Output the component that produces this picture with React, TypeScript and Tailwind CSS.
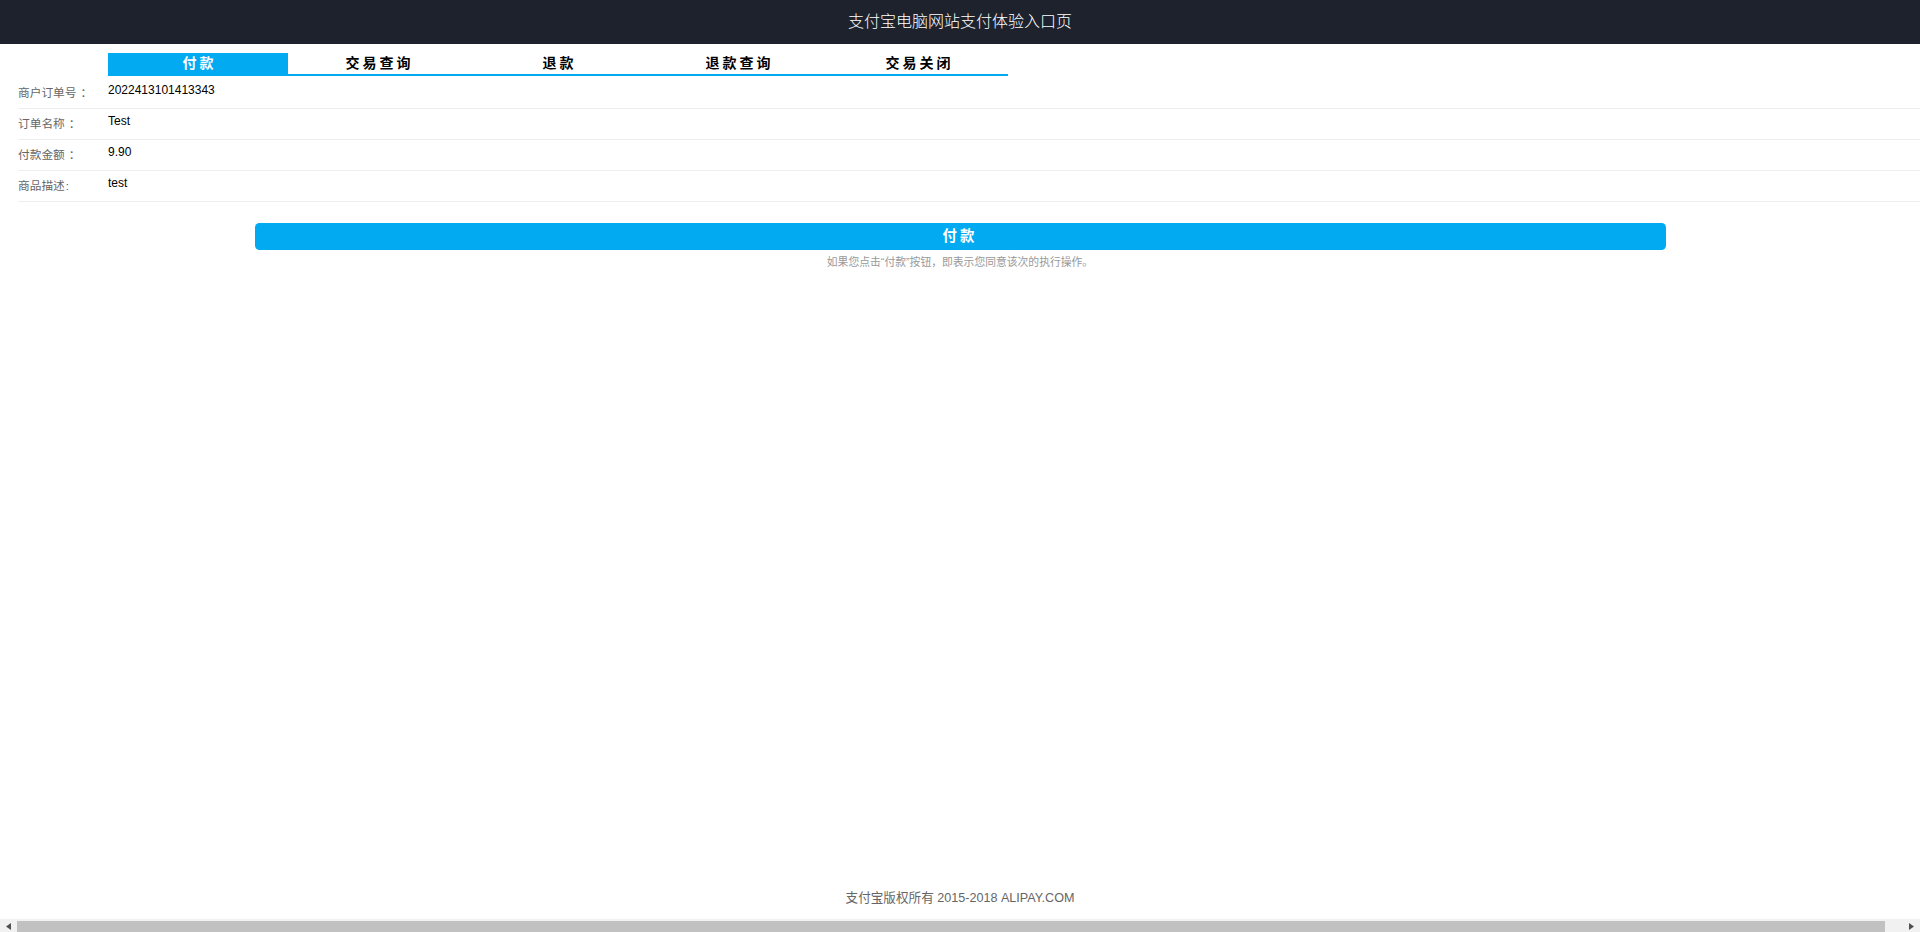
import React from "react";

const FONT = "font-['Liberation_Sans','Noto_Sans_CJK_SC',sans-serif]";

const tabs = ["付款", "交易查询", "退款", "退款查询", "交易关闭"];

const rows: [string, string, boolean][] = [
  ["商户订单号", "2022413101413343", true],
  ["订单名称", "Test", true],
  ["付款金额", "9.90", true],
  ["商品描述", "test", false],
];

export default function App() {
  return (
    <div className={`${FONT} h-[932px] w-full flex flex-col bg-white overflow-hidden`}>
      <header className="h-[44px] bg-[#1D222D] flex items-center justify-center shrink-0">
        <h1 className="text-[16px] font-light text-white leading-[18px]">支付宝电脑网站支付体验入口页</h1>
      </header>

      <div className="flex ml-[108px] mt-[9px]">
        {tabs.map((t, i) => (
          <div
            key={t}
            className={`w-[180px] h-[23px] border-b-2 border-[#02aaf1] flex items-center justify-center text-[14px] font-bold tracking-[3px] ${
              i === 0 ? "bg-[#02aaf1] text-white" : "text-black"
            }`}
          >
            <span className="pl-[3px]">{t}</span>
          </div>
        ))}
      </div>

      <div className="mt-[2px]">
        {rows.map(([label, value, wide]) => (
          <div key={label} className="ml-[18px] h-[31px] border-b border-[#eeeeee] flex items-start">
            <div className="w-[90px] mt-[8px] text-[11.7px] leading-[14px] text-[#666666]">
              {label}
              <span className={wide ? "ml-[4px]" : "ml-[1px]"}>{wide ? "：" : ":"}</span>
            </div>
            <div className="h-[25px] leading-[25px] text-[12px] text-black">{value}</div>
          </div>
        ))}
      </div>

      <div className="m-[18px] mt-[20px] flex flex-col items-center">
        <div className="w-[75%] p-[1px]">
          <button className="w-full h-[27px] bg-[#02aaf1] rounded-[4.5px] text-white font-bold text-[14.4px] tracking-[3px]">
            付款
          </button>
        </div>
        <span className="mt-[4px] w-full text-center text-[10.8px] leading-[14px] text-[#999999]">
          如果您点击“付款”按钮，即表示您同意该次的执行操作。
        </span>
      </div>

      <div className="flex-1" />

      <footer className="text-center text-[12.6px] leading-[18px] text-[#666666] mb-[12px]">
        支付宝版权所有 2015-2018 ALIPAY.COM
      </footer>

      <div className="h-[13px] bg-[#f1f1f1] flex shrink-0">
        <div className="w-[17px] flex items-center justify-center pt-[2px]">
          <svg width="5" height="7" viewBox="0 0 5 7">
            <path d="M5 0 L0 3.5 L5 7 Z" fill="#505050" />
          </svg>
        </div>
        <div className="flex-1 mt-[2px] bg-[#c1c1c1]" />
        <div className="w-[35px] flex items-center justify-end pr-[6px] pt-[2px]">
          <svg width="5" height="7" viewBox="0 0 5 7">
            <path d="M0 0 L5 3.5 L0 7 Z" fill="#505050" />
          </svg>
        </div>
      </div>
    </div>
  );
}
